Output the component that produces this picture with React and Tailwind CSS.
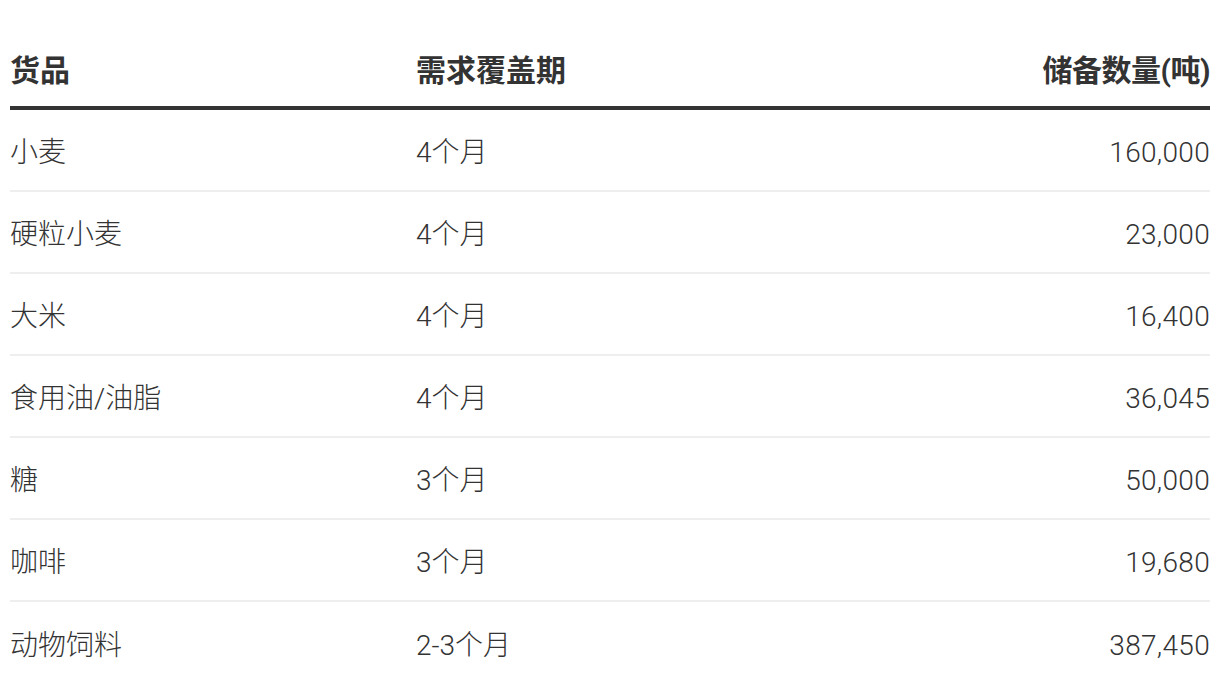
const rows = [
  ["小麦", "4个月", "160,000"],
  ["硬粒小麦", "4个月", "23,000"],
  ["大米", "4个月", "16,400"],
  ["食用油/油脂", "4个月", "36,045"],
  ["糖", "3个月", "50,000"],
  ["咖啡", "3个月", "19,680"],
  ["动物饲料", "2-3个月", "387,450"],
];

export default function App() {
  return (
    <div
      className="min-h-screen bg-white px-[10px] text-[#333]"
      style={{ fontFamily: 'Roboto, "Noto Sans CJK SC", sans-serif' }}
    >
      {/* 表头 */}
      <div className="grid grid-cols-[406px_1fr_auto] h-[110px] border-b-4 border-[#333] pt-[53px] text-[30px] font-bold leading-[36px]">
        <div>货品</div>
        <div>需求覆盖期</div>
        <div className="text-right tracking-[-0.5px]">储备数量(吨)</div>
      </div>

      {rows.map(([name, period, qty], i) => (
        <div
          key={name}
          className={
            "grid grid-cols-[406px_1fr_auto] h-[82px] items-center pt-[6px] text-[28px] font-light leading-[36px] " +
            (i < rows.length - 1 ? "border-b-2 border-[#eeeeee]" : "")
          }
        >
          <div>{name}</div>
          <div>{period}</div>
          <div className="text-right tracking-[0.3px]">{qty}</div>
        </div>
      ))}
    </div>
  );
}
